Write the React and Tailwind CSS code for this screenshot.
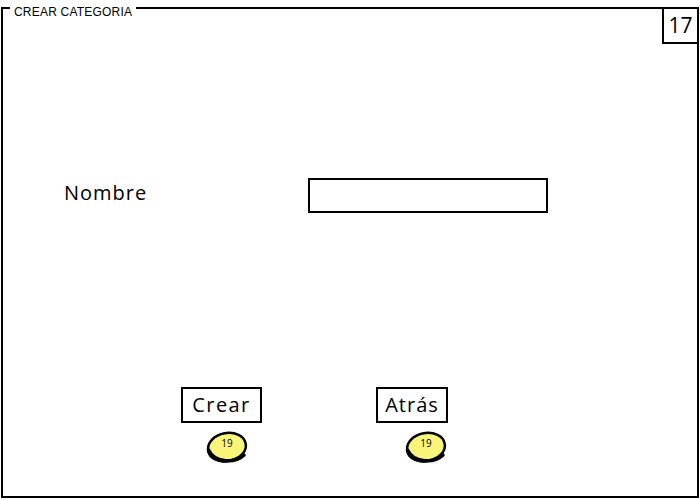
import React from "react";

function Badge() {
  return (
    <div className="relative w-[44px] h-[34px]">
      <svg width="44" height="34" viewBox="0 0 44 34" className="absolute inset-0">
        <ellipse cx="22" cy="16" rx="19" ry="14" fill="#f8f57a" stroke="#000" strokeWidth="2.5" transform="rotate(-10 22 16)" />
        <path d="M3.5 19 C5 31 25 34 39 24 C31 32 10 33 3.5 19 Z" fill="#000" stroke="#000" strokeWidth="3.5" strokeLinejoin="round" />
      </svg>
      <span className="absolute left-0 right-0 top-[7px] text-center text-[10px] leading-none text-black [font-family:'Open_Sans',sans-serif]">19</span>
    </div>
  );
}

export default function App() {
  return (
    <div className="w-[700px] h-[500px] bg-white relative [font-family:'Open_Sans','Noto_Sans',sans-serif]">
      <div className="absolute left-[10px] top-0 px-[4px] bg-white text-[12px] leading-[11px] tracking-[0.2px] text-black [font-family:'Liberation_Sans',Arial,sans-serif]">
        CREAR CATEGORIA
      </div>
      <div className="ml-[1px] mt-[7px] w-[698px] h-[491px] border-2 border-black flex flex-col">
        <div className="flex justify-end">
          <div className="w-[35px] h-[35px] border-l-2 border-b-2 border-black flex items-center justify-center text-[21px] font-medium text-black">
            17
          </div>
        </div>
        <div className="mt-[134px] flex items-center pl-[61px]">
          <div className="w-[244px] pb-[5px] text-[20px] font-medium tracking-[1px] text-black">Nombre</div>
          <div className="w-[240px] h-[35px] border-2 border-black bg-white" />
        </div>
        <div className="mt-[174px] flex pl-[178px]">
          <div className="w-[81px] h-[36px] border-2 border-black flex items-center justify-center text-[20px] font-medium tracking-[1.4px] text-black">
            Crear
          </div>
          <div className="ml-[114px] w-[72px] h-[36px] border-2 border-black flex items-center justify-center text-[20px] font-medium tracking-[1px] text-black">
            Atrás
          </div>
        </div>
        <div className="mt-[8px] flex">
          <div className="ml-[202px]"><Badge /></div>
          <div className="ml-[155px]"><Badge /></div>
        </div>
      </div>
    </div>
  );
}
